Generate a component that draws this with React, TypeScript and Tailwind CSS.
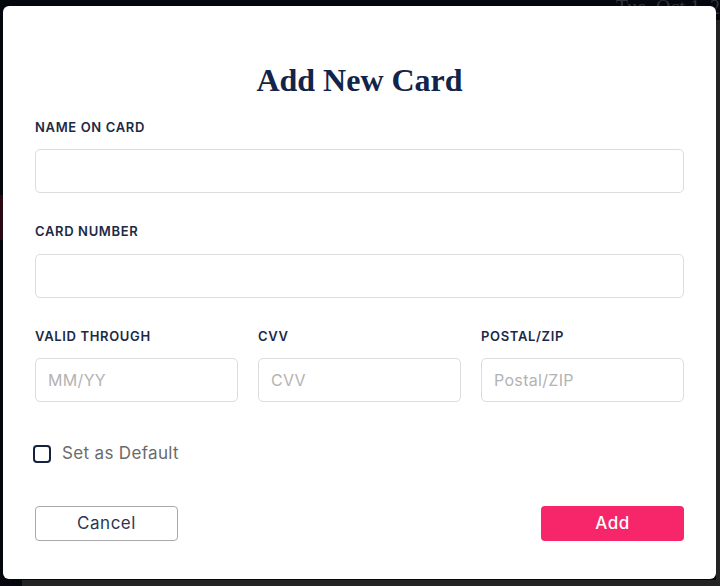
import React from "react";

const sans = { fontFamily: "Inter, 'Open Sans', sans-serif" };

function Field({ label, placeholder, mt }: { label: string; placeholder?: string; mt: string }) {
  return (
    <div className="flex flex-col">
      <label className="h-4 text-[13px] leading-4 font-semibold text-[#1c2946] tracking-[0.05em]">{label}</label>
      <input
        className={`${mt} h-[44px] w-full rounded-[5px] border border-[#dcdcdc] bg-white px-3 text-[16px] text-[#333] placeholder:text-[#b3b3b3] outline-none tracking-[0.02em]`}
        placeholder={placeholder}
      />
    </div>
  );
}

export default function App() {
  return (
    <div className="relative h-[586px] w-[720px] overflow-hidden bg-[#04070d]" style={sans}>
      <div className="absolute right-[-30px] top-[-8px] text-[20px] text-[#2f333b]" style={{ fontFamily: "'Liberation Serif', serif" }}>
        Tue, Oct 1, 2024
      </div>
      <div className="absolute right-0 top-[20px] h-[566px] w-[4px] bg-[#232323]" />
      <div className="absolute bottom-0 left-[22px] h-[6px] w-[698px] bg-[#232323]" />
      <div className="absolute left-0 top-[195px] h-[45px] w-[3px] bg-[#2a0a12]" />

      <div className="absolute left-[3px] top-[6px] flex h-[573px] w-[713px] flex-col rounded-[6px] bg-white px-[32px] pt-[54px]">
        <h1
          className="h-10 text-center text-[32px] font-bold leading-10 text-[#13244a]"
          style={{ fontFamily: "'Liberation Serif', 'DejaVu Serif', serif" }}
        >
          Add New Card
        </h1>
        <div className="mt-[19px] flex flex-col">
          <Field label="NAME ON CARD" mt="mt-[14px]" />
          <div className="mt-[30px]">
            <Field label="CARD NUMBER" mt="mt-[15px]" />
          </div>
          <div className="mt-[30px] grid grid-cols-3 gap-5">
            <Field label="VALID THROUGH" placeholder="MM/YY" mt="mt-[14px]" />
            <Field label="CVV" placeholder="CVV" mt="mt-[14px]" />
            <Field label="POSTAL/ZIP" placeholder="Postal/ZIP" mt="mt-[14px]" />
          </div>
        </div>
        <label className="mt-[43px] flex h-[18px] items-center gap-[11px]">
          <span className="ml-[-2px] block h-[18px] w-[18px] rounded-[4px] border-2 border-[#15223f] bg-white" />
          <span className="text-[17px] text-[#6b6b6b] tracking-[0.02em]">Set as Default</span>
        </label>
        <div className="mt-[43px] flex items-center justify-between">
          <button className="h-[35px] w-[143px] rounded-[4px] border border-[#a9a9a9] bg-white text-[17px] tracking-[0.03em] text-[#2b3853]">
            Cancel
          </button>
          <button className="h-[35px] w-[143px] rounded-[4px] bg-[#f7256a] text-[17px] font-medium tracking-[0.03em] text-white">
            Add
          </button>
        </div>
      </div>
    </div>
  );
}
